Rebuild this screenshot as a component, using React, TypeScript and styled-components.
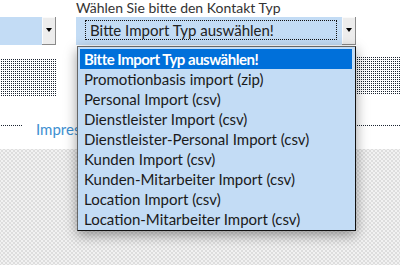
import React from "react";
import styled, { createGlobalStyle } from "styled-components";

const Global = createGlobalStyle`
  html, body { margin: 0; padding: 0; background: #fff; }
  body { font-family: "Lato", "Open Sans", sans-serif; }
`;

const Page = styled.div`
  position: relative;
  width: 400px;
  height: 265px;
  overflow: hidden;
  display: flex;
  flex-direction: column;
`;

const Header = styled.div`
  height: 149px;
  background: #fff;
  display: grid;
  grid-template-columns: 76px 280px 1fr;
`;

const Footer = styled.div`
  flex: 1;
  background-color: #f2f2f2;
  background-image: radial-gradient(#dcdcdc 0.7px, transparent 0.9px),
    radial-gradient(#dcdcdc 0.7px, transparent 0.9px);
  background-size: 4px 4px;
  background-position: 0 0, 2px 2px;
`;

const Column = styled.div`
  display: flex;
  flex-direction: column;
  min-width: 0;
`;

const LeftColumn = styled(Column)`
  padding-top: 17px;
`;

const RightColumn = styled(Column)`
  padding-top: 57px;
`;

const DotBlock = styled.div<{ $w?: string; $h: number; $mt?: number }>`
  flex-shrink: 0;
  width: ${(p) => p.$w ?? "100%"};
  height: ${(p) => p.$h}px;
  margin-top: ${(p) => p.$mt ?? 0}px;
  background-image: conic-gradient(#1c2532 0 25%, transparent 0);
  background-size: 2px 2px;
`;

const LinkRow = styled.div<{ $mt: number }>`
  display: flex;
  align-items: flex-start;
  gap: 14px;
  margin-top: ${(p) => p.$mt}px;
`;

const Link = styled.a`
  font-size: 15px;
  line-height: 18px;
  color: #3d8fd1;
  text-decoration: none;
  white-space: nowrap;
  margin-top: -5px;
`;

const Label = styled.div`
  font-size: 14px;
  line-height: 17px;
  margin-top: -1px;
  color: #333;
  white-space: nowrap;
  height: 18px;
`;

const SelectBox = styled.div<{ $w: number }>`
  width: ${(p) => p.$w}px;
  height: 28px;
  display: flex;
`;

const SelectField = styled.div`
  flex: 1;
  background: #c3dcf5;
  display: flex;
  align-items: center;
  padding: 4px 5px 6px 9px;
  box-sizing: border-box;
`;

const FocusRing = styled.div`
  flex: 1;
  height: 18px;
  border: 1px dotted #111;
  display: flex;
  align-items: center;
  padding-left: 4px;
  font-size: 15px;
  color: #222;
  white-space: nowrap;
  overflow: hidden;
`;

const SelectButton = styled.div`
  width: 14px;
  background: #ededed;
  box-shadow: inset -1px -1px 0 #8a8a8a, inset 1px 1px 0 #fafafa;
  display: flex;
  align-items: center;
  justify-content: center;
  padding-bottom: 2px;
  box-sizing: border-box;
`;

const Arrow = styled.span`
  width: 0;
  height: 0;
  border-left: 3.5px solid transparent;
  border-right: 3.5px solid transparent;
  border-top: 4px solid #000;
`;

const Dropdown = styled.ul`
  position: absolute;
  left: 77px;
  top: 46px;
  width: 279px;
  height: 185px;
  box-sizing: border-box;
  margin: 0;
  padding: 2px 3px 2px 2px;
  list-style: none;
  background: #c3dcf5;
  border: 1px solid #666;
  border-right-color: #111;
  border-bottom-color: #111;
  box-shadow: 0 4px 12px rgba(0, 0, 0, 0.4);
`;

const Option = styled.li<{ $active?: boolean }>`
  height: 20px;
  line-height: 20px;
  padding-left: 4px;
  font-size: 15px;
  white-space: nowrap;
  color: ${(p) => (p.$active ? "#fff" : "#1a1a1a")};
  background: ${(p) => (p.$active ? "#0070da" : "transparent")};
  font-weight: ${(p) => (p.$active ? 700 : 400)};
  letter-spacing: ${(p) => (p.$active ? "-0.5px" : "0")};
`;

const options = [
  "Bitte Import Typ auswählen!",
  "Promotionbasis import (zip)",
  "Personal Import (csv)",
  "Dienstleister Import (csv)",
  "Dienstleister-Personal Import (csv)",
  "Kunden Import (csv)",
  "Kunden-Mitarbeiter Import (csv)",
  "Location Import (csv)",
  "Location-Mitarbeiter Import (csv)",
];

export default function App() {
  return (
    <>
      <Global />
      <Page>
        <Header>
          <LeftColumn>
            <SelectBox $w={56}>
              <SelectField />
              <SelectButton>
                <Arrow />
              </SelectButton>
            </SelectBox>
            <DotBlock $w="57px" $h={37} $mt={14} />
            <LinkRow $mt={29}>
              <DotBlock $w="22px" $h={2} />
              <Link href="#">Impressum</Link>
            </LinkRow>
          </LeftColumn>
          <Column>
            <Label>Wählen Sie bitte den Kontakt Typ</Label>
            <SelectBox $w={280}>
              <SelectField>
                <FocusRing>Bitte Import Typ auswählen!</FocusRing>
              </SelectField>
              <SelectButton>
                <Arrow />
              </SelectButton>
            </SelectBox>
          </Column>
          <RightColumn>
            <DotBlock $h={37} />
            <DotBlock $h={2} $mt={31} />
          </RightColumn>
        </Header>
        <Footer />
        <Dropdown>
          {options.map((o, i) => (
            <Option key={o} $active={i === 0}>
              {o}
            </Option>
          ))}
        </Dropdown>
      </Page>
    </>
  );
}
